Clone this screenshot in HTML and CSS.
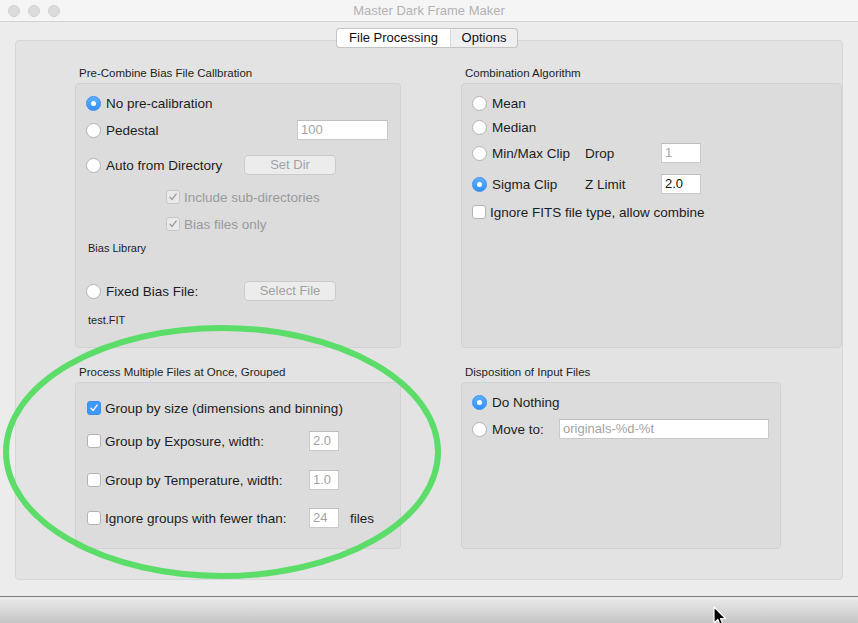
FILE: index.html
```html
<!DOCTYPE html>
<html>
<head>
<meta charset="utf-8">
<link rel="stylesheet" href="styles.css">
</head>
<body>
<div class="window">
  <div class="titlebar">
    <div class="lights"><span class="light"></span><span class="light"></span><span class="light"></span></div>
    <div class="title">Master Dark Frame Maker</div>
  </div>
  <div class="main">
    <div class="tabview">
      <div class="tabs">
        <div class="tab tab-active">File Processing</div>
        <div class="tab tab-other">Options</div>
      </div>
      <div class="panels">
        <section class="group">
          <div class="gtitle">Pre-Combine Bias File Callbration</div>
          <div class="box box-top">
            <div class="row">
              <span class="radio on"></span><span class="label">No pre-calibration</span>
            </div>
            <div class="row mt7">
              <span class="radio"></span><span class="label w191">Pedestal</span>
              <span class="field w90">100</span>
            </div>
            <div class="row mt15">
              <span class="radio"></span><span class="label w138">Auto from Directory</span>
              <span class="button w92">Set Dir</span>
            </div>
            <div class="row mt12 indent80">
              <span class="check dis"><svg viewBox="0 0 14 14"><path d="M3.5 7.2 L6 9.8 L10.6 3.6"/></svg></span><span class="label grey">Include sub-directories</span>
            </div>
            <div class="row mt7 indent80">
              <span class="check dis"><svg viewBox="0 0 14 14"><path d="M3.5 7.2 L6 9.8 L10.6 3.6"/></svg></span><span class="label grey">Bias files only</span>
            </div>
            <div class="small mt7">Bias Library</div>
            <div class="row mt26">
              <span class="radio"></span><span class="label w138">Fixed Bias File:</span>
              <span class="button w92">Select File</span>
            </div>
            <div class="small mt12">test.FIT</div>
          </div>
        </section>

        <section class="group">
          <div class="gtitle">Combination Algorithm</div>
          <div class="box box-top">
            <div class="row">
              <span class="radio"></span><span class="label">Mean</span>
            </div>
            <div class="row mt4">
              <span class="radio"></span><span class="label">Median</span>
            </div>
            <div class="row mt6">
              <span class="radio"></span><span class="label w93">Min/Max Clip</span>
              <span class="label2 w76">Drop</span>
              <span class="field w40">1</span>
            </div>
            <div class="row mt11">
              <span class="radio on"></span><span class="label w93">Sigma Clip</span>
              <span class="label2 w76">Z Limit</span>
              <span class="field w40 dark">2.0</span>
            </div>
            <div class="row mt8">
              <span class="check"></span><span class="label">Ignore FITS file type, allow combine</span>
            </div>
          </div>
        </section>

        <section class="group">
          <div class="gtitle">Process Multiple Files at Once, Grouped</div>
          <div class="box box-bottom pt15">
            <div class="row indent1">
              <span class="check on"><svg viewBox="0 0 14 14"><path d="M3.5 7.2 L6 9.8 L10.6 3.6"/></svg></span><span class="label">Group by size (dimensions and binning)</span>
            </div>
            <div class="row mt13 indent1">
              <span class="check"></span><span class="label w204">Group by Exposure, width:</span>
              <span class="field w30">2.0</span>
            </div>
            <div class="row mt19 indent1">
              <span class="check"></span><span class="label w204">Group by Temperature, width:</span>
              <span class="field w30">1.0</span>
            </div>
            <div class="row mt18 indent1">
              <span class="check"></span><span class="label w204">Ignore groups with fewer than:</span>
              <span class="field w30">24</span>
              <span class="label files">files</span>
            </div>
          </div>
        </section>

        <section class="group">
          <div class="gtitle">Disposition of Input Files</div>
          <div class="box box-bottom narrow">
            <div class="row">
              <span class="radio on"></span><span class="label">Do Nothing</span>
            </div>
            <div class="row mt7">
              <span class="radio"></span><span class="label w67">Move to:</span>
              <span class="field w210">originals-%d-%t</span>
            </div>
          </div>
        </section>
      </div>
    </div>
  </div>
  <div class="statusbar"></div>

  <svg class="annot" width="858" height="623" viewBox="0 0 858 623">
    <ellipse cx="222" cy="452" rx="216" ry="124" fill="none" stroke="#5cdd6a" stroke-width="6"/>
  </svg>
  <svg class="cursor" width="14" height="22" viewBox="0 0 14 22">
    <path d="M1 1 L1 17 L4.8 13.4 L7.4 19.6 L10 18.5 L7.5 12.5 L12.6 12.5 Z" fill="#000" stroke="#fff" stroke-width="1.2" stroke-linejoin="round"/>
  </svg>
</div>
</body>
</html>
```
FILE: styles.css
```css
html, body {
  margin: 0;
  padding: 0;
}
body {
  width: 858px;
  height: 623px;
  overflow: hidden;
  font-family: "Liberation Sans", Arial, sans-serif;
  color: #1c1c1c;
}
.window {
  position: relative;
  width: 858px;
  height: 623px;
  display: flex;
  flex-direction: column;
  background: #ececec;
}
.titlebar {
  height: 21px;
  flex: none;
  background: #f5f5f5;
  border-bottom: 1px solid #d3d3d3;
  display: flex;
  align-items: center;
  position: relative;
}
.lights {
  display: flex;
  gap: 8px;
  padding-left: 8px;
}
.light {
  width: 12px;
  height: 12px;
  box-sizing: border-box;
  border-radius: 50%;
  background: #dcdcdc;
  border: 1px solid #d0d0d0;
}
.title {
  position: absolute;
  left: 0;
  right: 0;
  top: 0;
  line-height: 22px;
  text-align: center;
  font-size: 13px;
  color: #b3b3b3;
}
.main {
  flex: 1;
  display: flex;
  flex-direction: column;
}
.tabview {
  margin: 18px 15px 0 15px;
  height: 540px;
  box-sizing: border-box;
  border: 1px solid #d7d7d7;
  border-radius: 4px;
  background: #e3e3e3;
}
.tabs {
  display: flex;
  justify-content: center;
  margin-top: -13px;
  padding-right: 4px;
}
.tab {
  height: 20px;
  font-size: 13px;
  color: #111;
  box-sizing: border-box;
  text-align: center;
}
.tab-active {
  width: 114px;
  background: #fff;
  border: 1px solid #c4c4c4;
  border-right: none;
  border-radius: 4px 0 0 4px;
  line-height: 18px;
}
.tab-other {
  width: 68px;
  background: #efefef;
  border: 1px solid #c4c4c4;
  border-left: 1px solid #d6d6d6;
  border-radius: 0 4px 4px 0;
  line-height: 18px;
}
.panels {
  display: grid;
  grid-template-columns: 326px 381px;
  column-gap: 60px;
  row-gap: 17px;
  margin-top: 18px;
  padding-left: 59px;
}
.gtitle {
  font-size: 11.5px;
  line-height: 14px;
  padding-left: 4px;
  margin-bottom: 3px;
  color: #1e1e1e;
}
.box {
  box-sizing: border-box;
  background: #dcdcdc;
  border: 1px solid #d2d2d2;
  border-radius: 4px;
  padding: 9px 10px 0 10px;
  display: flex;
  flex-direction: column;
}
.box-top { height: 265px; }
.box-bottom { height: 167px; }
.narrow { width: 320px; }
.pt15 { padding-top: 15px; }
.row {
  display: flex;
  align-items: center;
  height: 20px;
  font-size: 13.5px;
}
.indent80 { padding-left: 80px; }
.indent1 { padding-left: 1px; }
.mt4 { margin-top: 4px; }
.mt6 { margin-top: 6px; }
.mt7 { margin-top: 7px; }
.mt8 { margin-top: 8px; }
.mt11 { margin-top: 11px; }
.mt12 { margin-top: 12px; }
.mt13 { margin-top: 13px; }
.mt15 { margin-top: 15px; }
.mt18 { margin-top: 18px; }
.mt19 { margin-top: 19px; }
.mt26 { margin-top: 26px; }
.radio {
  flex: none;
  width: 15px;
  height: 15px;
  box-sizing: border-box;
  border-radius: 50%;
  background: #fff;
  border: 1px solid #b3b3b3;
  margin-right: 5px;
  position: relative;
}
.radio.on {
  background: linear-gradient(#5eb0ff, #3190f8);
  border: 1px solid #3a8ff0;
}
.radio.on::after {
  content: "";
  position: absolute;
  left: 50%;
  top: 50%;
  width: 5px;
  height: 5px;
  margin: -2.5px 0 0 -2.5px;
  border-radius: 50%;
  background: #fff;
}
.check {
  flex: none;
  width: 14px;
  height: 14px;
  box-sizing: border-box;
  border-radius: 3px;
  background: #fff;
  border: 1px solid #b3b3b3;
  margin-right: 4px;
  display: flex;
}
.check svg {
  width: 12px;
  height: 12px;
  fill: none;
  stroke-width: 1.6;
  stroke-linecap: round;
  stroke-linejoin: round;
}
.check.on {
  background: #3d99fb;
  border-color: #3b8ff0;
}
.check.on svg { stroke: #fff; }
.check.dis {
  background: #e9e9e9;
  border-color: #c7c7c7;
}
.check.dis svg { stroke: #9e9e9e; }
.label {
  flex: none;
  white-space: nowrap;
  color: #1c1c1c;
}
.label.grey { color: #9a9a9a; }
.label2 {
  flex: none;
  color: #1c1c1c;
}
.files { margin-left: 11px; }
.w30 { width: 30px; }
.w40 { width: 40px; }
.w67 { width: 67px; }
.w76 { width: 76px; }
.w90 { width: 91px; }
.w92 { width: 92px; }
.w93 { width: 93px; }
.w138 { width: 138px; }
.w191 { width: 191px; }
.w204 { width: 204px; }
.w210 { width: 210px; }
.field {
  flex: none;
  height: 20px;
  box-sizing: border-box;
  background: #fff;
  border: 1px solid #c9c9c9;
  border-top-color: #bdbdbd;
  font-size: 13px;
  line-height: 18px;
  padding-left: 3px;
  color: #a3a3a3;
}
.field.dark { color: #111; }
.button {
  flex: none;
  height: 20px;
  box-sizing: border-box;
  border: 1px solid #cbcbcb;
  border-radius: 4px;
  background: #ececec;
  text-align: center;
  line-height: 18px;
  font-size: 13px;
  color: #a2a2a2;
}
.small {
  font-size: 11px;
  line-height: 14px;
  padding-left: 2px;
  color: #1c1c1c;
}
.statusbar {
  flex: none;
  height: 26px;
  border-top: 1px solid #7e7e7e;
  background: linear-gradient(#ebebeb, #c5c5c5);
}
.annot {
  position: absolute;
  left: 0;
  top: 0;
  pointer-events: none;
}
.cursor {
  position: absolute;
  left: 713px;
  top: 606px;
}
```
